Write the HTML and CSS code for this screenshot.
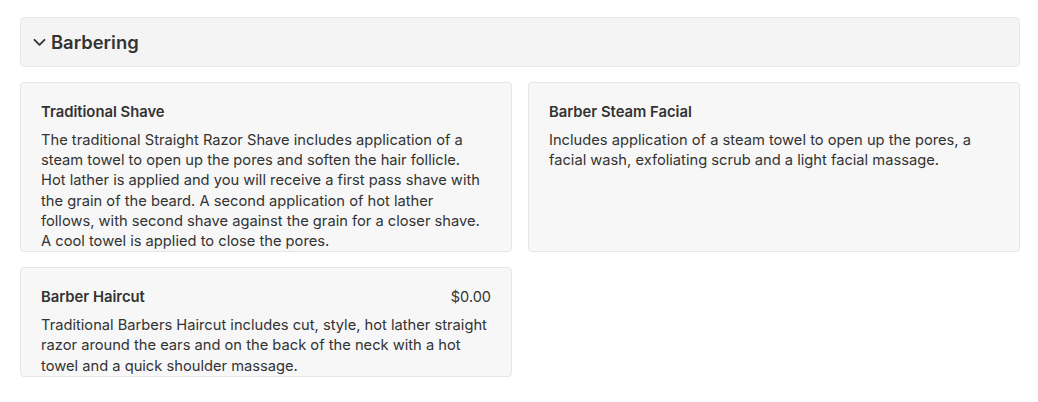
FILE: index.html
```html
<!DOCTYPE html>
<html lang="en">
<head>
<meta charset="utf-8">
<title>Barbering</title>
<link rel="stylesheet" href="styles.css">
</head>
<body>
<div class="page">
  <div class="section-header">
    <svg class="chevron" width="13" height="9" viewBox="0 0 13 9"><path d="M1.5 1.8 L6.5 6.8 L11.5 1.8" fill="none" stroke="#333" stroke-width="1.8" stroke-linecap="round" stroke-linejoin="round"/></svg>
    <span class="section-title">Barbering</span>
  </div>
  <div class="grid">
    <div class="card">
      <div class="card-head"><span class="card-title">Traditional Shave</span></div>
      <p class="card-desc">The traditional Straight Razor Shave includes application of a steam towel to open up the pores and soften the hair follicle. Hot lather is applied and you will receive a first pass shave with the grain of the beard. A second application of hot lather follows, with second shave against the grain for a closer shave. A cool towel is applied to close the pores.</p>
    </div>
    <div class="card">
      <div class="card-head"><span class="card-title">Barber Steam Facial</span></div>
      <p class="card-desc">Includes application of a steam towel to open up the pores, a facial wash, exfoliating scrub and a light facial massage.</p>
    </div>
    <div class="card">
      <div class="card-head"><span class="card-title">Barber Haircut</span><span class="card-price">$0.00</span></div>
      <p class="card-desc">Traditional Barbers Haircut includes cut, style, hot lather straight razor around the ears and on the back of the neck with a hot towel and a quick shoulder massage.</p>
    </div>
  </div>
</div>
</body>
</html>
```
FILE: styles.css
```css
* { box-sizing: border-box; }
html, body { margin: 0; padding: 0; background: #fff; }
body {
  font-family: Inter, "Open Sans", "Liberation Sans", sans-serif;
  color: #333;
}
.page {
  width: 1000px;
  margin: 17px 0 0 20px;
}
.section-header {
  height: 50px;
  background: #f4f4f4;
  border: 1px solid #e9e9e9;
  border-radius: 4px;
  display: flex;
  align-items: center;
  padding-left: 12px;
  gap: 5px;
}
.chevron { display: block; }
.section-title {
  font-size: 18.4px;
  font-weight: 600;
  color: #333;
}
.grid {
  margin-top: 15px;
  display: grid;
  grid-template-columns: 492px 492px;
  column-gap: 16px;
  row-gap: 15px;
}
.card {
  background: #f7f7f7;
  border: 1px solid #e6e6e6;
  border-radius: 4px;
  padding: 19px 20px 0 20px;
  overflow: hidden;
}
.card-head {
  display: flex;
  justify-content: space-between;
  align-items: center;
  line-height: 20px;
  font-size: 14.8px;
}
.card-title { font-weight: 600; }
.card-price { font-weight: 400; font-size: 14.5px; }
.card-desc {
  margin: 8px 3.5px 0 0;
  font-size: 14.7px;
  line-height: 20.2px;
}
```
